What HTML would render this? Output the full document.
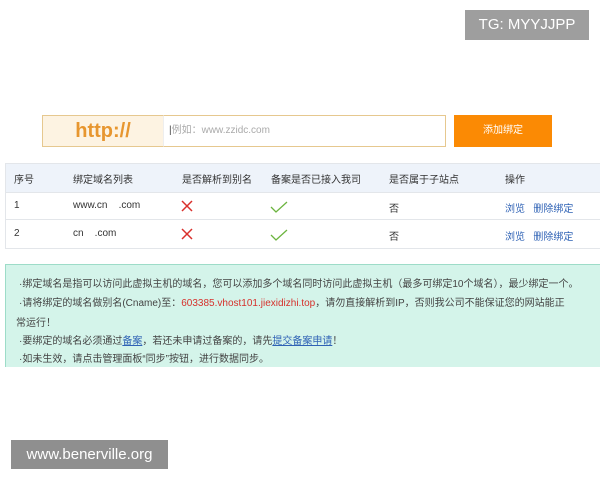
<!DOCTYPE html>
<html><head><meta charset="utf-8"><style>
body{margin:0;width:600px;height:480px;background:#fff;position:relative;overflow:hidden;font-family:"Liberation Sans","Noto Sans CJK SC",sans-serif;font-size:10px;color:#333}
.a{position:absolute}
.tg{left:465px;top:10px;width:124px;height:30px;background:#9e9e9e;color:#fff;font-size:15px;line-height:30px;text-align:center}
.bn{left:11px;top:440px;width:157px;height:29px;background:#8f8f8f;color:#fff;font-size:15px;line-height:29px;text-align:center}
.http{left:42px;top:115px;width:120px;height:30px;background:#fdf3e2;border:1px solid #e6c88f;color:#e7962f;font-weight:bold;font-size:20px;line-height:30px;text-align:center}
.inp{left:163px;top:115px;width:276px;height:30px;border:1px solid #e6c88f;border-left:1px solid #eee;color:#aaa;line-height:30px;padding-left:5px}
.btn{left:454px;top:115px;width:98px;height:32px;background:#fb8a04;color:#fff;line-height:32px;text-align:center}
.tb{left:5px;top:163px;width:594px;height:84px;border:1px solid #e3e6ea}
.hd{left:5px;top:163px;width:595px;height:29px;background:#eef3fa}
.ln{left:5px;width:595px;height:1px;background:#e3e6ea}
.t{position:absolute;font-size:10px;white-space:nowrap}
.note{left:5px;top:264px;width:594px;height:102px;background:#d4f4ea;border:1px solid #9ddcc8;border-bottom:none}
.note div{position:absolute;left:13px;font-size:10px;color:#444;white-space:nowrap}
.lk{color:#2f62b5}
</style></head><body>
<div class="a tg">TG: MYYJJPP</div>
<div class="a http">http://</div>
<div class="a inp"><span style="color:#444">|</span>例如：www.zzidc.com</div>
<div class="a btn">添加绑定</div>
<div class="a hd"></div>
<div class="a tb"></div>
<div class="a ln" style="top:219px"></div>
<div class="a ln" style="top:192px"></div>
<div class="t" style="left:14px;top:171px">序号</div>
<div class="t" style="left:73px;top:171px">绑定域名列表</div>
<div class="t" style="left:182px;top:171px">是否解析到别名</div>
<div class="t" style="left:271px;top:171px">备案是否已接入我司</div>
<div class="t" style="left:389px;top:171px">是否属于子站点</div>
<div class="t" style="left:505px;top:171px">操作</div>
<div class="t" style="left:14px;top:200px">1</div>
<div class="t" style="left:73px;top:200px">www.cn&nbsp;&nbsp;&nbsp;&nbsp;.com</div>
<div class="t" style="left:389px;top:200px">否</div>
<div class="t lk" style="left:505px;top:200px">浏览&nbsp;&nbsp;&nbsp;删除绑定</div>
<div class="t" style="left:14px;top:228px">2</div>
<div class="t" style="left:73px;top:228px">cn&nbsp;&nbsp;&nbsp;&nbsp;.com</div>
<div class="t" style="left:389px;top:228px">否</div>
<div class="t lk" style="left:505px;top:228px">浏览&nbsp;&nbsp;&nbsp;删除绑定</div>
<svg class="a" style="left:180px;top:199px" width="14" height="14"><path d="M2 2L12 12M12 2L2 12" stroke="#d9302c" stroke-width="1.5"/></svg>
<svg class="a" style="left:180px;top:227px" width="14" height="14"><path d="M2 2L12 12M12 2L2 12" stroke="#d9302c" stroke-width="1.5"/></svg>
<svg class="a" style="left:270px;top:200px" width="18" height="14"><path d="M1 7L6 12L17 2" stroke="#6cb43f" stroke-width="1.3" fill="none"/></svg>
<svg class="a" style="left:270px;top:228px" width="18" height="14"><path d="M1 7L6 12L17 2" stroke="#6cb43f" stroke-width="1.3" fill="none"/></svg>
<div class="a note">
<div style="top:10px">·绑定域名是指可以访问此虚拟主机的域名，您可以添加多个域名同时访问此虚拟主机（最多可绑定10个域名），最少绑定一个。</div>
<div style="top:29px">·请将绑定的域名做别名(Cname)至：<span style="color:#d6312c">603385.vhost101.jiexidizhi.top</span>，请勿直接解析到IP，否则我公司不能保证您的网站能正</div>
<div style="top:49px;left:10px">常运行！</div>
<div style="top:67px">·要绑定的域名必须通过<u class="lk">备案</u>，若还未申请过备案的，请先<u class="lk">提交备案申请</u>！</div>
<div style="top:85px">·如未生效，请点击管理面板“同步”按钮，进行数据同步。</div>
</div>
<div class="a bn">www.benerville.org</div>
</body></html>
